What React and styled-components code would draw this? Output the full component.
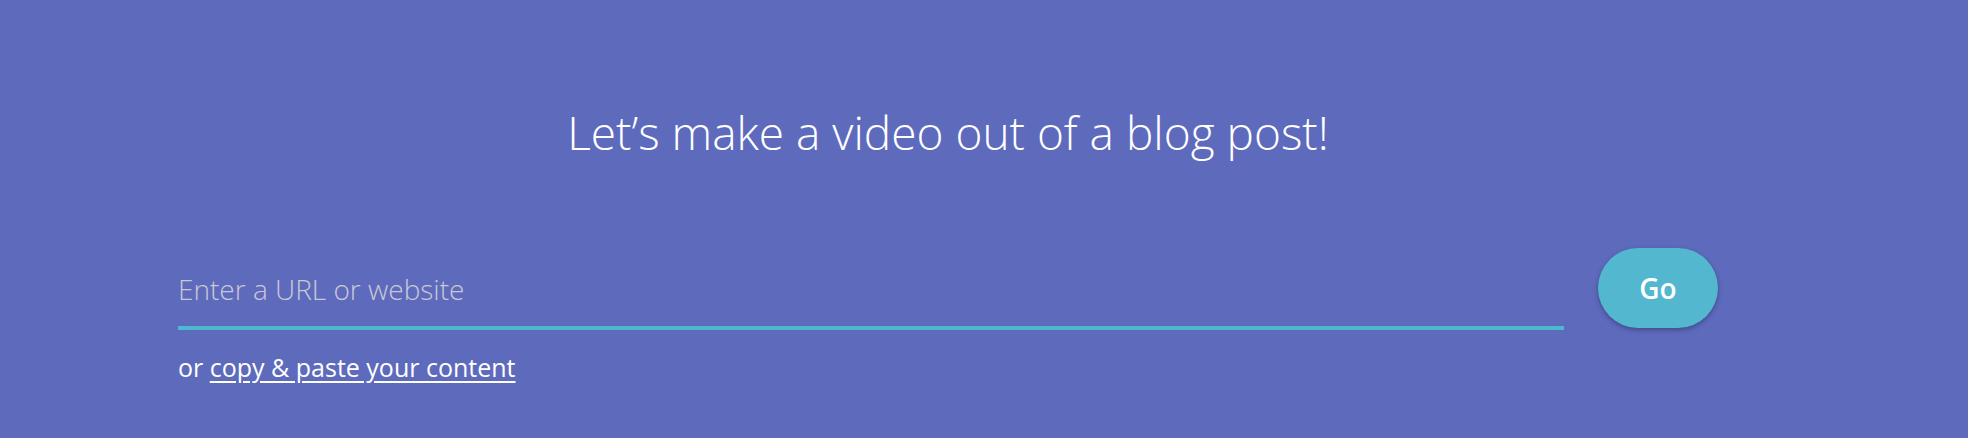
import React from 'react';
import styled, { createGlobalStyle } from 'styled-components';

const GlobalStyle = createGlobalStyle`
  html, body {
    margin: 0;
    padding: 0;
    background: #5e6bbd;
  }
  body {
    font-family: "Open Sans", "Noto Sans", sans-serif;
  }
`;

const Page = styled.div`
  width: 1968px;
  height: 438px;
  background: #5e6bbd;
  box-sizing: border-box;
  padding: 100px 250px 0 178px;
`;

const Title = styled.h1`
  margin: 0;
  font-family: "Open Sans", sans-serif;
  font-weight: 300;
  font-size: 46px;
  line-height: 64px;
  color: #ffffff;
  text-align: center;
`;

const Row = styled.div`
  display: flex;
  align-items: flex-start;
  gap: 34px;
  margin-top: 84px;
`;

const UrlInput = styled.input`
  flex: 1;
  box-sizing: border-box;
  height: 82px;
  padding: 4px 0 0 0;
  border: none;
  border-bottom: 4px solid #4fb8d1;
  background: transparent;
  outline: none;
  font-family: "Open Sans", sans-serif;
  font-weight: 300;
  font-size: 28px;
  color: #ffffff;

  &::placeholder {
    color: #cac8d4;
    opacity: 1;
  }
`;

const GoButton = styled.button`
  flex: none;
  width: 120px;
  height: 80px;
  border: none;
  border-radius: 40px;
  background: #53b7cf;
  box-shadow: 0 2px 5px rgba(30, 30, 80, 0.45);
  color: #ffffff;
  font-family: "Open Sans", sans-serif;
  font-weight: 600;
  font-size: 28px;
  cursor: pointer;
`;

const Hint = styled.p`
  margin: 21px 0 0;
  font-family: "Open Sans", sans-serif;
  font-size: 25px;
  line-height: 32px;
  color: #ffffff;
`;

const HintLink = styled.a`
  color: #ffffff;
  text-decoration: underline;
  text-underline-offset: 4px;
  cursor: pointer;
`;

export default function App() {
  return (
    <>
      <GlobalStyle />
      <Page>
        <Title>Let’s make a video out of a blog post!</Title>
        <Row>
          <UrlInput placeholder="Enter a URL or website" />
          <GoButton>Go</GoButton>
        </Row>
        <Hint>
          or <HintLink>copy &amp; paste your content</HintLink>
        </Hint>
      </Page>
    </>
  );
}
